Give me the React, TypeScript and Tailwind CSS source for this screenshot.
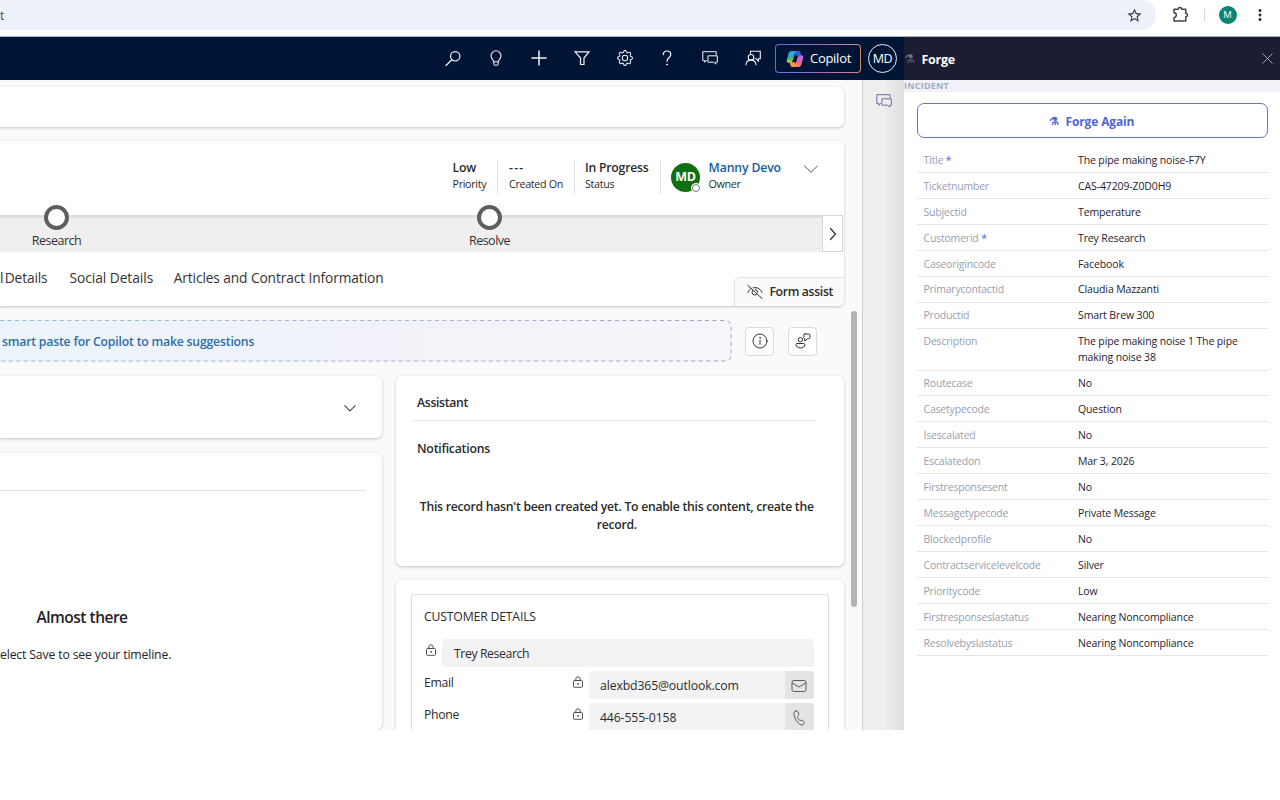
import type { ReactNode } from 'react'
import { BsGear } from 'react-icons/bs'
import { MdMoreVert, MdStarBorder } from 'react-icons/md'

type IconProps = { className?: string; children: ReactNode; box?: number }

function Icon({ className = 'size-4', children, box = 16 }: IconProps) {
  return (
    <svg viewBox={`0 0 ${box} ${box}`} fill="none" stroke="currentColor" strokeLinecap="round" strokeLinejoin="round" className={`shrink-0 ${className}`}>
      {children}
    </svg>
  )
}

function ChatIcon({ className }: { className?: string }) {
  return (
    <Icon className={className}>
      <path d="M4.500 10.500H4.200L2.800 12.300V10.500H.8V1.700h13.400v2.800" strokeLinejoin="miter" />
      <path d="M6.300 5.800h9v6.400h-1.500v2l-2-2H6.300z" strokeLinejoin="miter" />
    </Icon>
  )
}

function CopilotLogo() {
  return (
    <svg viewBox="0 0 18 18" className="size-[18px] shrink-0">
      <defs>
        <linearGradient id="cool" x1="0.2" y1="0" x2="0.3" y2="1">
          <stop offset="0" stopColor="#2fa4ee" />
          <stop offset="0.5" stopColor="#27aeb0" />
          <stop offset="0.75" stopColor="#6dbb5c" />
          <stop offset="1" stopColor="#f0c83c" />
        </linearGradient>
        <linearGradient id="warm" x1="0.7" y1="0" x2="0.2" y2="1">
          <stop offset="0" stopColor="#a56bf0" />
          <stop offset="0.5" stopColor="#f0609a" />
          <stop offset="1" stopColor="#ff8f5e" />
        </linearGradient>
      </defs>
      <path d="M8 1h4.500c1.100 0 1.600.6 1.900 1.500l1 3.200H9.500z" fill="#2263dc" />
      <path d="M9.800 17H6.500c-1.100 0-1.700-.6-2-1.500l-1-3.200h6z" fill="#f9a03c" />
      <path d="M5.500 1h5c-.9.400-1.300 1.200-1.600 2.200L6.800 10.300c-.5 1.500-1.300 2.400-2.800 2.400H2.700C1 12.700.3 11.500.8 9.700l1.800-6.200C3.100 1.900 4 1 5.500 1z" fill="url(#cool)" />
      <path d="M12.500 17H7.700c.9-.4 1.300-1.200 1.600-2.200l2.100-7.100c.5-1.500 1.200-2.400 2.700-2.400h1.200c1.700 0 2.400 1.200 1.900 3l-1.800 6.200c-.5 1.600-1.400 2.500-2.900 2.500z" fill="url(#warm)" />
    </svg>
  )
}

function LockIcon() {
  return (
    <Icon className="size-3 text-[#505050]" box={12}>
      <rect x="1.500" y="4.500" width="9" height="6.800" rx="1" />
      <path d="M3.800 4.500V3a2.200 2.200 0 0 1 4.400 0v1.500" />
      <circle cx="6" cy="7.900" r="0.400" fill="currentColor" />
    </Icon>
  )
}

function BrowserBar() {
  return (
    <div className="flex h-[37px] items-start border-b border-[#a9b4c0] bg-white">
      <div className="flex h-[30px] w-[1156px] items-center justify-between rounded-r-[15px] bg-[#edf1fa] pr-[13px]">
        <span className="pt-[2px] text-[12px] text-[#444]">t</span>
        <MdStarBorder className="size-[17px] text-[#3c3f43]" />
      </div>
      <div className="flex h-[30px] items-center">
        <Icon className="ml-[15px] size-[18px] text-[#444]" box={18}>
          <path d="M3 3.200h4.200a1.700 1.700 0 0 1 3.400 0h4.200v4.200a1.700 1.700 0 0 1 0 3.400v4.200H3v-3.600a2.300 2.300 0 0 0 0-4.600z" strokeWidth="1.500" />
        </Icon>
        <div className="ml-[14.500px] h-[14px] w-px bg-[#d0dbea]" />
        <div className="ml-[14px] flex size-[18px] items-center justify-center rounded-full bg-[#0b8571] text-[9.500px] text-white">M</div>
        <MdMoreVert className="ml-[14px] size-[18px] text-[#333]" />
      </div>
    </div>
  )
}

function TopNav() {
  return (
    <div className="flex h-[43px] w-[904px] shrink-0 items-center bg-[#001536] text-[#f1f3f8]">
      <div className="ml-[445px] flex items-center gap-[27px] pb-px">
        <Icon><circle cx="10.200" cy="6.300" r="4.700" strokeWidth="1.200" /><path d="M6.800 9.700 1 15.500" strokeWidth="1.300" /></Icon>
        <Icon><path d="M5.800 11.800C5.800 9.800 3 9 3 5.800a5 5 0 0 1 10 0c0 3.200-2.800 4-2.800 6zM5.800 11.800v1.800c0 .8.500 1.600 1.200 1.600h2c.7 0 1.200-.8 1.200-1.600v-1.800" strokeWidth="1.100" /></Icon>
        <Icon><path d="M8 1v14M1 8h14" strokeWidth="1.500" /></Icon>
        <Icon><path d="M1 1.800h14L10 8v6.500H6.500V8z" strokeLinejoin="miter" strokeWidth="1.200" /></Icon>
        <BsGear className="size-4" />
        <Icon className="-ml-px size-4"><path d="M4.200 4.600C4.400 2.400 6 1 8 1c2.200 0 3.800 1.500 3.800 3.500C11.800 7.600 8 7.600 8 11.300" strokeWidth="1.200" /><circle cx="8" cy="14.500" r=".5" fill="currentColor" /></Icon>
        <ChatIcon className="size-4" />
        <Icon>
          <path d="M5.500 3.300V1.300H15.300v7.400h-1.900v2.400l-2.400-2.400h-.8" strokeLinejoin="miter" strokeWidth="1.100" />
          <circle cx="6" cy="7.300" r="2.800" strokeWidth="1.100" />
          <path d="M1 14.800c.2-3 2-4.700 5-4.700s4.800 1.700 5 4.700" strokeWidth="1.100" />
        </Icon>
      </div>
      <div className="ml-[14px] h-[29px] w-[86px] rounded-[4px] bg-linear-to-r from-[#5f6ee0] via-[#a267c8] to-[#d98a67] p-px">
        <div className="flex h-full items-center rounded-[3px] bg-[#001536] pl-[10px]">
          <CopilotLogo />
          <span className="ml-[6px] text-[13px] tracking-[-0.280px] text-white">Copilot</span>
        </div>
      </div>
      <div className="ml-[7px] flex size-[29px] items-center justify-center rounded-full border border-[#e8ebf2] pt-[2px] text-[12.500px] tracking-[-0.300px] text-white">MD</div>
    </div>
  )
}

function Fact({ value, label, className = '' }: { value: ReactNode; label: string; className?: string }) {
  return (
    <div className={className}>
      <div className="text-[12.250px] leading-[16px] font-semibold tracking-[-0.230px]">{value}</div>
      <div className="text-[10.750px] leading-[17px] tracking-[-0.330px]">{label}</div>
    </div>
  )
}

function Stage({ name, className }: { name: string; className: string }) {
  return (
    <div className={`flex w-[80px] flex-col items-center ${className}`}>
      <div className="size-[25px] rounded-full border-[4px] border-[#5e5e5e] bg-white" />
      <span className="mt-[2px] ml-px text-[12.500px] leading-[18px] tracking-[-0.500px] text-[#333]">{name}</span>
    </div>
  )
}

const cardShadow = 'shadow-[0_1px_3px_rgba(0,0,0,0.22)]'

function RecordHeader() {
  return (
    <div className={`mt-[14px] flex h-[165px] w-[844px] flex-col overflow-hidden rounded-r-[6px] bg-white ${cardShadow}`}>
      <div className="flex h-[74px] shrink-0 pt-[19px]">
        <div className="flex h-[34px] text-[#2b2b2b]">
          <Fact value="Low" label="Priority" className="ml-[452.500px] w-[44.500px]" />
          <Fact value={<span className="tracking-[1.200px]">---</span>} label="Created On" className="w-[77px] border-l border-[#e1e1e1] pl-[11px]" />
          <Fact value="In Progress" label="Status" className="w-[86px] border-l border-[#e1e1e1] pl-[10px]" />
          <div className="flex border-l border-[#e1e1e1] pl-[10px]">
            <div className="relative mt-[3px] flex size-[29px] items-center justify-center rounded-full bg-[#0e700e] text-[12.500px] font-bold tracking-[-0.300px] text-white">
              MD
              <span className="absolute -right-[1px] -bottom-[1px] flex size-[10px] items-center justify-center rounded-full bg-white">
                <span className="size-[8px] rounded-full border border-[#777]" />
              </span>
            </div>
            <div className="ml-[8.500px]">
              <div className="text-[12.250px] leading-[16px] font-semibold tracking-[-0.130px] text-[#115ea3]">Manny Devo</div>
              <div className="text-[10.750px] leading-[17px] tracking-[-0.330px]">Owner</div>
            </div>
          </div>
          <Icon className="mt-[1px] ml-[22px] size-4 text-[#555]"><path d="M1.500 5 8 11.300 14.500 5" /></Icon>
        </div>
      </div>
      <div className="flex h-[37px] shrink-0">
        <div className="flex w-[822px] border-t-[3px] border-[#dedede] bg-[#efefef]">
          <Stage name="Research" className="-mt-[13px] ml-[16px]" />
          <Stage name="Resolve" className="-mt-[13px] ml-[353px]" />
        </div>
        <div className="flex w-[21px] items-center justify-center border border-[#d6d6d6] bg-white text-[#333]">
          <Icon className="size-[14px]" box={14}><path d="m4.500 1.500 5 5.500-5 5.500" strokeWidth="1.200" /></Icon>
        </div>
      </div>
      <div className="flex flex-1 justify-between">
        <div className="flex h-[53px] items-center text-[13.750px] text-[#333]">
          <span className="[word-spacing:-2px] tracking-[-0.150px]">l Details</span>
          <span className="ml-[22px] tracking-[-0.040px]">Social Details</span>
          <span className="ml-[20.500px] tracking-[-0.110px]">Articles and Contract Information</span>
        </div>
        <div className="mt-[25px] flex items-center self-stretch rounded-tl-[6px] border-t border-l border-[#e3e3e3] bg-[#fafafa] pr-[11px] pl-[12px] text-[#2b2b2b]">
          <Icon className="size-4">
            <path d="M1 1.500 15 14.500M1 8.500C1.600 6.700 2.700 5.400 4.200 4.600M6.200 3.800c4-.9 7.700 1.100 8.800 4.700" />
            <path d="M6 6.300a2.700 2.700 0 1 0 3.900 3.700M8.300 5.600a2.700 2.700 0 0 1 2.400 2.600" />
          </Icon>
          <span className="ml-[6px] text-[12.250px] font-semibold tracking-[-0.350px]">Form assist</span>
        </div>
      </div>
    </div>
  )
}

function SmartPaste() {
  return (
    <div className="mt-[14px] flex h-[42px] items-center">
      <div className="relative flex h-full w-[732px] items-center overflow-hidden rounded-r-[6px] bg-linear-to-r from-[#ecf4fb] via-[#f1f2f9] to-[#f8f4fb]">
        <span className="pt-[2px] pl-[2px] text-[12.250px] font-semibold tracking-[-0.200px] text-[#2f6da6]">smart paste for Copilot to make suggestions</span>
        <svg className="absolute inset-0 h-[42px] w-[732px]" viewBox="0 0 732 42" fill="none">
          <defs>
            <linearGradient id="dash" x1="0" y1="0" x2="732" y2="0" gradientUnits="userSpaceOnUse">
              <stop stopColor="#93bfd6" />
              <stop offset="0.600" stopColor="#a9b4d4" />
              <stop offset="1" stopColor="#ab9ac4" />
            </linearGradient>
          </defs>
          <path d="M0 .5H726a5 5 0 0 1 5 5V36a5 5 0 0 1-5 5H0" stroke="url(#dash)" strokeDasharray="4 3.500" />
        </svg>
      </div>
      <div className="ml-[13px] flex size-[29px] items-center justify-center rounded-[4px] border border-[#dadada] bg-white text-[#333]">
        <Icon><circle cx="8" cy="8" r="7" /><path d="M8 7.200v4" /><circle cx="8" cy="4.900" r=".3" /></Icon>
      </div>
      <div className="ml-[14px] flex size-[29px] items-center justify-center rounded-[4px] border border-[#dadada] bg-white text-[#333]">
        <Icon>
          <circle cx="5.400" cy="6.700" r="2.200" />
          <path d="M2.200 10.500h6.500c.7 0 1.200.5 1.200 1.100 0 2-1.700 3.300-4.500 3.300S1 13.600 1 11.600c0-.6.500-1.100 1.200-1.100z" />
          <path d="M9.800 1h4c.7 0 1.200.5 1.200 1.200v2.400c0 .7-.5 1.200-1.200 1.200h-1.300L9.800 8V5.700c-.6-.1-1-.5-1-1.100V2.200C8.800 1.500 9.200 1 9.800 1z" />
        </Icon>
      </div>
    </div>
  )
}

function ContactRow({ label, value, action }: { label: string; value: string; action: ReactNode }) {
  return (
    <div className="mt-[4px] flex h-[28px] shrink-0">
      <span className="w-[148px] pt-[3px] text-[12.250px] leading-[18px] tracking-[-0.300px]">{label}</span>
      <div className="pt-[5px]"><LockIcon /></div>
      <div className="ml-[5px] flex flex-1 items-center justify-between overflow-hidden rounded-[3px] bg-[#f3f3f3]">
        <span className="pt-[2px] pl-[11px] text-[12.250px] tracking-[-0.130px]">{value}</span>
        <div className="flex h-full w-[29px] items-center justify-center bg-[#e4e4e4] pt-px text-[#5c5c5c]">{action}</div>
      </div>
    </div>
  )
}

function Cards() {
  return (
    <div className="mt-[14px] flex min-h-0 flex-1">
      <div className="flex w-[382px] flex-col">
        <div className={`flex h-[62px] shrink-0 items-center justify-end rounded-r-[6px] bg-white pt-px pr-[25px] ${cardShadow}`}>
          <Icon className="size-[14px] text-[#444]" box={14}><path d="M1.800 4.700 7 9.800l5.200-5.100" strokeWidth="1.100" /></Icon>
        </div>
        <div className={`mt-[15px] flex-1 rounded-r-[6px] bg-white ${cardShadow}`}>
          <div className="mr-[16px] h-[38px] border-b border-[#dedede]" />
          <div className="w-[172px] text-[#242424]">
            <div className="mt-[114px] ml-[36.500px] text-[15.500px] leading-[24px] font-semibold tracking-[-0.500px]">Almost there</div>
            <div className="mt-[17px] text-[12.250px] leading-[18px] tracking-[-0.160px] whitespace-nowrap">elect Save to see your timeline.</div>
          </div>
        </div>
      </div>
      <div className="ml-[13.500px] flex w-[448.500px] flex-col text-[#2b2b2b]">
        <div className={`h-[190px] shrink-0 rounded-[6px] bg-white text-[12.250px] font-semibold ${cardShadow}`}>
          <div className="mr-[28px] ml-[16px] h-[45px] border-b border-[#e8e8e8] pt-[18px] pl-[5.500px] leading-[18px] tracking-[-0.330px]">Assistant</div>
          <div className="mt-[19px] ml-[21.500px] leading-[18px] tracking-[-0.220px]">Notifications</div>
          <div className="mt-[40px] mr-[24px] ml-[18px] text-center leading-[18px] tracking-[-0.276px]">
            This record hasn't been created yet. To enable this content, create the record.
          </div>
        </div>
        <div className={`mt-[14px] flex-1 rounded-t-[6px] bg-white pt-[14px] pr-[15.500px] pl-[15.500px] ${cardShadow}`}>
          <div className="flex h-full flex-col overflow-hidden rounded-t-[3px] border border-b-0 border-[#dedede] pr-[14px] pl-[12px]">
            <div className="pt-[13px] text-[12.250px] leading-[18px] tracking-[-0.190px]">CUSTOMER DETAILS</div>
            <div className="mt-[13px] flex h-[28px] shrink-0">
              <div className="pt-[5px] pl-px"><LockIcon /></div>
              <div className="ml-[5px] flex flex-1 items-center rounded-[3px] bg-[#f3f3f3] pt-[2px] pl-[12px] text-[12.250px] tracking-[-0.400px]">Trey Research</div>
            </div>
            <ContactRow label="Email" value="alexbd365@outlook.com" action={
              <Icon><rect x="1" y="2.500" width="14" height="11" rx="1.800" /><path d="m1.300 5 6.700 4 6.700-4" /></Icon>
            } />
            <ContactRow label="Phone" value="446-555-0158" action={
              <Icon><path d="M4.400 1.200 5.700 1c.5-.1.900.2 1.100.6l1 2.300c.2.400.1.900-.2 1.200L6.300 6.300c.3 1.500 1.500 3.500 2.700 4.400l1.700-.5c.4-.1.900 0 1.100.4l1.400 2c.3.400.2.900-.1 1.200l-.9.800c-.6.500-1.500.6-2.200.3C6.700 13.600 3.300 8.300 2.900 3.300c0-.9.600-1.800 1.500-2.100z" /></Icon>
            } />
          </div>
        </div>
      </div>
    </div>
  )
}

const fields: { name: string; value: string; required?: boolean }[] = [
  { name: 'Title', value: 'The pipe making noise-F7Y', required: true },
  { name: 'Ticketnumber', value: 'CAS-47209-Z0D0H9' },
  { name: 'Subjectid', value: 'Temperature' },
  { name: 'Customerid', value: 'Trey Research', required: true },
  { name: 'Caseorigincode', value: 'Facebook' },
  { name: 'Primarycontactid', value: 'Claudia Mazzanti' },
  { name: 'Productid', value: 'Smart Brew 300' },
  { name: 'Description', value: 'The pipe making noise 1 The pipe making noise 38' },
  { name: 'Routecase', value: 'No' },
  { name: 'Casetypecode', value: 'Question' },
  { name: 'Isescalated', value: 'No' },
  { name: 'Escalatedon', value: 'Mar 3, 2026' },
  { name: 'Firstresponsesent', value: 'No' },
  { name: 'Messagetypecode', value: 'Private Message' },
  { name: 'Blockedprofile', value: 'No' },
  { name: 'Contractservicelevelcode', value: 'Silver' },
  { name: 'Prioritycode', value: 'Low' },
  { name: 'Firstresponseslastatus', value: 'Nearing Noncompliance' },
  { name: 'Resolvebyslastatus', value: 'Nearing Noncompliance' },
]

function ForgePanel() {
  return (
    <div className="flex w-[376px] flex-col">
      <div className="flex h-[43px] shrink-0 items-center bg-[#1b1d33]">
        <span className="w-[17.500px] text-[12px] text-[#70717c]">⚗</span>
        <span className="flex-1 pt-[3px] text-[12.500px] font-bold tracking-[-0.300px] text-white">Forge</span>
        <Icon className="mr-[6px] size-[13px] text-[#a3a5b3]" box={13}><path d="m1.800 1.800 9.400 9.400M11.200 1.800l-9.400 9.400" /></Icon>
      </div>
      <div className="h-[12px] shrink-0 bg-[#f0f2f8] text-[9px] leading-[12px] font-bold tracking-[0.220px] text-[#a3adbd]">INCIDENT</div>
      <button className="mx-[12.500px] mt-[11px] flex h-[35px] shrink-0 items-center justify-center rounded-[7px] border border-[#6675c9] bg-white pt-[2px] pr-px text-[12px] font-bold tracking-[-0.150px] text-[#4f66d6]">
        <span className="mr-[7px] text-[11px]">⚗</span>Forge Again
      </button>
      <div className="mx-[12.500px] mt-[9px]">
        {fields.map((f) => (
          <div key={f.name} className="flex border-b border-[#e3e5e9] pt-[4.750px] pb-[4.200px] text-[10.500px] leading-[16px]">
            <span className="w-[161.500px] pl-[7px] tracking-[-0.200px] text-[#98a0ae]">
              {f.name}
              {f.required && <span className="text-[#4a63d8]"> *</span>}
            </span>
            <span className="w-[176px] tracking-[-0.120px] text-[#1f2233]">{f.value}</span>
          </div>
        ))}
      </div>
    </div>
  )
}

export default function App() {
  return (
    <div className="h-[800px] w-[1280px] overflow-hidden bg-white font-['Open_Sans','Noto_Sans',sans-serif]">
      <BrowserBar />
      <div className="flex h-[693px]">
        <div className="flex w-[904px] flex-col">
          <TopNav />
          <div className="flex min-h-0 flex-1">
            <div className="flex w-[862px] overflow-hidden bg-[#fafafa]">
              <div className="flex w-[850px] shrink-0 flex-col">
                <div className={`mt-[7px] h-[40px] w-[844px] shrink-0 rounded-r-[6px] bg-white ${cardShadow}`} />
                <RecordHeader />
                <SmartPaste />
                <Cards />
              </div>
              <div className="mt-[231px] ml-[1px] h-[296px] w-[6px] rounded-full bg-[#b4b4b4]" />
            </div>
            <div className="flex w-[42px] justify-center border-l border-[#cfcfcf] bg-linear-to-r from-[#efefef] from-50% to-[#dedede] pt-[13px] text-[#6a6ea8]">
              <ChatIcon className="size-4" />
            </div>
          </div>
        </div>
        <ForgePanel />
      </div>
    </div>
  )
}
